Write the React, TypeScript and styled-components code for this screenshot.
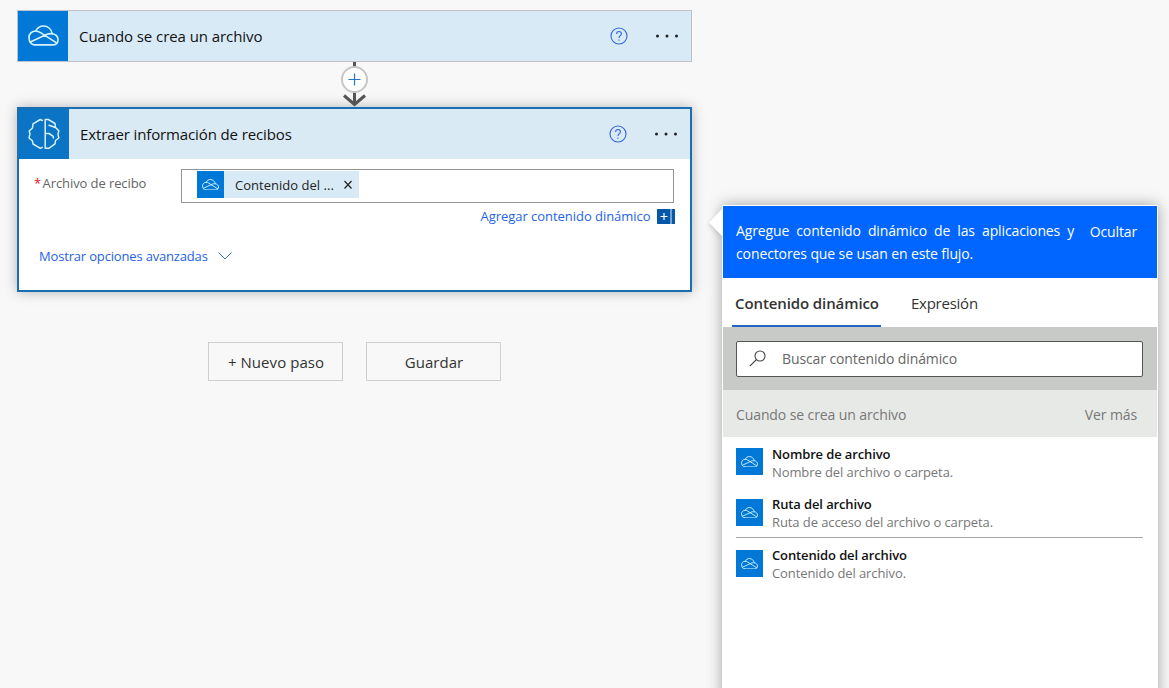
import React from "react";
import styled, { createGlobalStyle } from "styled-components";

const Global = createGlobalStyle`
  * { box-sizing: border-box; }
  body { margin: 0; background: #f8f8f8; font-family: "Open Sans", "Noto Sans", sans-serif; overflow: hidden; }
  button, input { font: inherit; }
`;

const Page = styled.div`
  display: flex;
  align-items: flex-start;
  width: 1169px;
  height: 688px;
  overflow: hidden;
  background: #f8f8f8;
`;

const Flow = styled.main`
  width: 675px;
  margin: 10px 0 0 17px;
  flex: none;
`;

const TriggerCard = styled.section`
  display: flex;
  height: 52px;
  border: 1px solid #bfc3c9;
  background: #d9eaf7;
`;

const ActionCard = styled.section`
  height: 185px;
  border: 2px solid #1a6fb3;
  background: #fff;
  box-shadow: 0 0 12px rgba(0, 0, 0, 0.28);
`;

const ActionHeader = styled.header`
  display: flex;
  height: 50px;
  background: #daeaf5;
`;

const CardIcon = styled.div<{ $color: string }>`
  display: flex;
  align-items: center;
  justify-content: center;
  width: 50px;
  height: 50px;
  background: ${(p) => p.$color};
`;

const CardTitle = styled.h2<{ $spacing: string }>`
  flex: 1;
  margin: 0;
  padding-left: 11px;
  font-size: 15px;
  font-weight: 400;
  line-height: 50px;
  letter-spacing: ${(p) => p.$spacing};
  color: #111;
  white-space: nowrap;
`;

const CardActions = styled.div`
  display: flex;
  align-items: center;
  gap: 27px;
  height: 49px;
  padding-right: 12.5px;
`;

const Connector = styled.div`
  display: flex;
  justify-content: center;
  height: 45px;
`;

const FieldRow = styled.div`
  display: flex;
  padding: 10px 16px 0 15px;
`;

const FieldLabel = styled.label`
  width: 147px;
  padding-top: 4px;
  font-size: 13px;
  line-height: 20px;
  letter-spacing: -0.09px;
  color: #666;
  white-space: nowrap;
`;

const Required = styled.span`
  color: #e81123;
  margin-right: 1.5px;
`;

const FieldBox = styled.div`
  flex: 1;
  height: 34px;
  padding: 1px 15px;
  border: 1px solid #949494;
`;

const Token = styled.div`
  display: flex;
  align-items: center;
  width: 162px;
  height: 27px;
  background: #d9eaf7;
`;

const Tile = styled.div`
  display: flex;
  align-items: center;
  justify-content: center;
  flex: none;
  width: 27px;
  height: 27px;
  background: #0078d7;
`;

const TokenText = styled.span`
  width: 119px;
  padding-left: 11px;
  font-size: 13px;
  line-height: 27px;
  padding-top: 1px;
  letter-spacing: 0.02px;
  color: #222;
  white-space: nowrap;
`;

const DynamicRow = styled.div`
  display: flex;
  justify-content: flex-end;
  align-items: center;
  gap: 6.5px;
  height: 26px;
  padding-right: 15px;
`;

const LinkText = styled.a<{ $spacing: string }>`
  font-size: 13px;
  line-height: 20px;
  letter-spacing: ${(p) => p.$spacing};
  color: #2563e6;
  white-space: nowrap;
`;

const AdvancedRow = styled.div`
  display: flex;
  align-items: center;
  gap: 10px;
  height: 20px;
  margin-top: 17px;
  padding-left: 20px;
`;

const Buttons = styled.div`
  display: flex;
  gap: 23px;
  margin: 50px 0 0 191px;
`;

const StepButton = styled.button`
  width: 135px;
  height: 39px;
  padding: 1px 0 0 1px;
  border: 1px solid #cfcfcf;
  background: #f8f8f8;
  color: #333;
  font-size: 15px;
  letter-spacing: 0.05px;
`;

const Panel = styled.aside`
  position: relative;
  width: 436px;
  height: 500px;
  margin: 205px 0 0 30px;
  flex: none;
  border: 1px solid #fff;
  background: #fff;
  box-shadow: 0 0 14px rgba(0, 0, 0, 0.35);
`;

const Pointer = styled.svg`
  position: absolute;
  left: -15px;
  top: 1px;
  filter: drop-shadow(-1px 2px 2px rgba(0, 0, 0, 0.12));
`;

const PanelHeader = styled.header`
  display: flex;
  justify-content: space-between;
  height: 72px;
  padding: 13px 20px 0 13px;
  background: #0066ff;
  color: #fff;
  font-size: 14px;
  line-height: 23px;
`;

const Message = styled.p`
  width: 339px;
  margin: 0;
`;

const MessageLine = styled.span<{ $words: string; $spacing: string }>`
  display: block;
  white-space: nowrap;
  word-spacing: ${(p) => p.$words};
  letter-spacing: ${(p) => p.$spacing};
`;

const Hide = styled.span`
  margin-top: 1px;
  letter-spacing: -0.15px;
`;

const Tabs = styled.nav`
  display: flex;
  height: 49px;
  padding-left: 9px;
  gap: 27px;
`;

const Tab = styled.div<{ $active?: boolean }>`
  padding: 0 3px;
  width: ${(p) => (p.$active ? "149px" : "auto")};
  border-bottom: 2px solid ${(p) => (p.$active ? "#2464c4" : "transparent")};
  color: #333;
  font-size: 15px;
  font-weight: ${(p) => (p.$active ? 600 : 400)};
  letter-spacing: ${(p) => (p.$active ? "-0.1px" : "-0.25px")};
  line-height: 51px;
  white-space: nowrap;
`;

const SearchArea = styled.div`
  height: 63px;
  padding: 14px 14px 0 13px;
  background: #c8cac8;
`;

const SearchBox = styled.div`
  display: flex;
  align-items: center;
  gap: 16px;
  height: 36px;
  padding: 0 0 2px 12px;
  border: 1px solid #555;
  border-radius: 2px;
  background: #fff;
  color: #666;
  font-size: 14px;
  letter-spacing: -0.1px;
`;

const SectionTitle = styled.div`
  display: flex;
  justify-content: space-between;
  height: 47px;
  padding: 1px 20px 0 13px;
  background: #e7e9e7;
  color: #777;
  font-size: 14px;
  line-height: 47px;
  letter-spacing: -0.1px;
`;

const Items = styled.div`
  padding: 7px 14px 0 13px;
`;

const Item = styled.div<{ $ruled?: boolean }>`
  display: flex;
  gap: 9px;
  height: ${(p) => (p.$ruled ? "44px" : "50px")};
  margin-bottom: ${(p) => (p.$ruled ? "7px" : "0")};
  border-bottom: ${(p) => (p.$ruled ? "1px solid #a6a6a6" : "0")};
`;

const ItemTile = styled(Tile)<{ $drop: number }>`
  margin-top: ${(p) => p.$drop}px;
`;

const ItemName = styled.div`
  padding-top: 1px;
  font-size: 13px;
  font-weight: 600;
  line-height: 18px;
  letter-spacing: -0.12px;
  color: #111;
`;

const ItemHint = styled.div`
  font-size: 13px;
  line-height: 18px;
  letter-spacing: -0.09px;
  color: #777;
`;

const Cloud = ({ w, stroke = 1.6 }: { w: number; stroke?: number }) => (
  <svg width={w} height={(w * 22) / 32} viewBox="0 0 32 22" fill="none" stroke="#d5f2ff" strokeWidth={stroke} strokeLinecap="round" strokeLinejoin="round">
    <path d="M6.5 20.500H26C29 20.500 31 18.300 31 15C31 12 28.500 9.300 25 9C24 4.200 20.300 1 16 1C12.300 1 9.500 3 8 6.200C4 6.200 1 9 1 13C1 17.300 3.500 20.500 6.500 20.500Z" />
    <path d="M8 6.200C10 6.200 11 6.700 13 7.900L29.500 18.500M2.500 17.500L19 9.800C21 9 22.500 8.800 25 9" />
  </svg>
);

const Brain = () => (
  <svg width="32" height="32" viewBox="0 0 32 32" fill="none" stroke="#d5f2ff" strokeWidth="1.5" strokeLinejoin="round" strokeLinecap="round">
    <path d="M14.300 2.500L12.300 1.500L5 5.800L4.500 10L1.200 13L2 16L1 20L4.500 22.800L5 26L12.300 30.300L14.300 29.300" />
    <path d="M17.200 1.500H20.300L27 5.500L27.500 9.500L30.800 12.800L30 16.300L30.800 20L27.500 22.500L27 25.800L20.800 30.300H17.200ZM21 7.300L27.500 9.500M17.200 15.500H21L25.300 18.300V20" />
  </svg>
);

const Help = () => (
  <svg width="18" height="18" viewBox="0 0 18 18" fill="none" stroke="#3465dc" strokeWidth="1.100">
    <circle cx="9" cy="9" r="8" />
    <path d="M6.600 6.900C6.600 5.400 7.600 4.500 9 4.500C10.400 4.500 11.400 5.400 11.400 6.700C11.400 8.600 9 8.700 9 11" />
    <path d="M9 12.500V13.800" />
  </svg>
);

const Dots = () => (
  <svg width="24" height="4" viewBox="0 0 24 4" fill="#222">
    <circle cx="2.500" cy="2" r="1.500" />
    <circle cx="12" cy="2" r="1.500" />
    <circle cx="21.500" cy="2" r="1.500" />
  </svg>
);

const entries = [
  { name: "Nombre de archivo", hint: "Nombre del archivo o carpeta.", drop: 4 },
  { name: "Ruta del archivo", hint: "Ruta de acceso del archivo o carpeta.", drop: 5, ruled: true },
  { name: "Contenido del archivo", hint: "Contenido del archivo.", drop: 5 },
];

export default function App() {
  return (
    <>
      <Global />
      <Page>
        <Flow>
          <TriggerCard>
            <CardIcon $color="#0078d7"><Cloud w={31} stroke={1.7} /></CardIcon>
            <CardTitle $spacing="-0.07px">Cuando se crea un archivo</CardTitle>
            <CardActions><Help /><Dots /></CardActions>
          </TriggerCard>
          <Connector>
            <svg width="31" height="45" viewBox="0 0 31 45" fill="none">
              <path d="M15.500 0V43" stroke="#555" strokeWidth="3" />
              <path d="M5 33.500L15.500 42.500L26 33.500" stroke="#555" strokeWidth="3" />
              <circle cx="15.500" cy="17.500" r="12.500" fill="#fff" stroke="#c8c6c4" strokeWidth="2" />
              <path d="M9.500 17.500H21.500M15.500 11.500V23.500" stroke="#2477cc" strokeWidth="1.200" />
            </svg>
          </Connector>
          <ActionCard>
            <ActionHeader>
              <CardIcon $color="#0b74c4"><Brain /></CardIcon>
              <CardTitle $spacing="-0.12px">Extraer información de recibos</CardTitle>
              <CardActions><Help /><Dots /></CardActions>
            </ActionHeader>
            <FieldRow>
              <FieldLabel><Required>*</Required>Archivo de recibo</FieldLabel>
              <FieldBox>
                <Token>
                  <Tile><Cloud w={17} stroke={1.8} /></Tile>
                  <TokenText>Contenido del ...</TokenText>
                  <svg width="10" height="9" viewBox="0 0 10 9" stroke="#222" strokeWidth="1.200"><path d="M1.500 1L8.500 8.500M8.500 1L1.500 8.500" /></svg>
                </Token>
              </FieldBox>
            </FieldRow>
            <DynamicRow>
              <LinkText $spacing="-0.04px">Agregar contenido dinámico</LinkText>
              <svg width="18" height="15" viewBox="0 0 18 15">
                <path d="M0 0H18V15H0Z" fill="#0757a8" />
                <path d="M3.500 7.500H10.500M7 4V11" stroke="#fff" strokeWidth="1.200" />
                <path d="M14 0V15" stroke="#b9d5ee" strokeWidth="1.200" />
              </svg>
            </DynamicRow>
            <AdvancedRow>
              <LinkText $spacing="-0.17px">Mostrar opciones avanzadas</LinkText>
              <svg width="14" height="8" viewBox="0 0 14 8" fill="none" stroke="#3969c8"><path d="M0.500 0.500L7 7L13.500 0.500" /></svg>
            </AdvancedRow>
          </ActionCard>
          <Buttons>
            <StepButton>+ Nuevo paso</StepButton>
            <StepButton>Guardar</StepButton>
          </Buttons>
        </Flow>
        <Panel>
          <Pointer width="15" height="31" viewBox="0 0 15 31"><path d="M15 1L1 15.500L15 30Z" fill="#fff" /></Pointer>
          <PanelHeader>
            <Message>
              <MessageLine $words="3.6px" $spacing="-0.13px">Agregue contenido dinámico de las aplicaciones y</MessageLine>
              <MessageLine $words="0" $spacing="-0.11px">conectores que se usan en este flujo.</MessageLine>
            </Message>
            <Hide>Ocultar</Hide>
          </PanelHeader>
          <Tabs>
            <Tab $active>Contenido dinámico</Tab>
            <Tab>Expresión</Tab>
          </Tabs>
          <SearchArea>
            <SearchBox>
              <svg width="17" height="17" viewBox="0 0 17 17" fill="none" stroke="#444" strokeWidth="1.100"><circle cx="11" cy="6" r="5" /><path d="M7.500 9.500L0.800 16.200" /></svg>
              <span>Buscar contenido dinámico</span>
            </SearchBox>
          </SearchArea>
          <SectionTitle><span>Cuando se crea un archivo</span><span>Ver más</span></SectionTitle>
          <Items>
            {entries.map((e) => (
              <Item key={e.name} $ruled={e.ruled}>
                <ItemTile $drop={e.drop}><Cloud w={17} stroke={1.7} /></ItemTile>
                <div>
                  <ItemName>{e.name}</ItemName>
                  <ItemHint>{e.hint}</ItemHint>
                </div>
              </Item>
            ))}
          </Items>
        </Panel>
      </Page>
    </>
  );
}
